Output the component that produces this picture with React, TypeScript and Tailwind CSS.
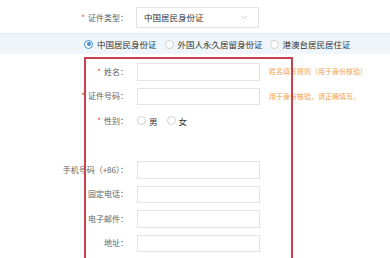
import React from 'react';

const font = { fontFamily: '"Noto Sans CJK SC", "Noto Sans", sans-serif' };

const Radio = ({ checked = false }: { checked?: boolean }) => (
  <span
    className={`inline-flex items-center justify-center w-[9px] h-[9px] rounded-full border bg-white shrink-0 ${
      checked ? 'border-[#3b8fd9]' : 'border-[#cfcfcf]'
    }`}
  >
    {checked && <span className="w-[4px] h-[4px] rounded-full bg-[#3b8fd9]" />}
  </span>
);

const Row = ({
  label,
  required = false,
  hint,
  children,
}: {
  label: string;
  required?: boolean;
  hint?: string;
  children?: React.ReactNode;
}) => (
  <div className="flex items-center h-[17.5px]">
    <div className="w-[128px] text-right text-[8px] text-[#5f5f5f] whitespace-nowrap leading-none">
      {required && <span className="text-[#e4393c] mr-[3px]">*</span>}
      {label}
    </div>
    <div className="ml-[9px] w-[123px] h-full flex items-center">
      {children ?? <div className="w-full h-full border border-[#e3e3e3] bg-white" />}
    </div>
    {hint && (
      <div className="ml-[9px] text-[7px] text-[#f0a24a] whitespace-nowrap leading-none">{hint}</div>
    )}
  </div>
);

export default function App() {
  return (
    <div className="relative w-[390px] h-[258px] overflow-hidden bg-white" style={font}>
      {/* 证件类型 */}
      <div className="flex items-center h-[21px] mt-[7px]">
        <div className="w-[128px] text-right text-[8px] text-[#5f5f5f] leading-none">
          <span className="text-[#e4393c] mr-[3px]">*</span>证件类型：
        </div>
        <div className="ml-[8px] w-[123px] h-full border border-[#e3e3e3] flex items-center justify-between px-[7px]">
          <span className="text-[8.5px] text-[#333] leading-none">中国居民身份证</span>
          <svg width="7" height="5" viewBox="0 0 7 5" className="mr-[3px]">
            <path d="M1 1l2.5 2.5L6 1" stroke="#cfcfcf" strokeWidth="1" fill="none" />
          </svg>
        </div>
      </div>

      {/* 证件选项 */}
      <div className="mt-[5px] h-[21px] bg-[#eef5fb] border-t border-[#dfe9f3] flex items-center pl-[84px] text-[8.5px] text-[#333] leading-none">
        <span className="flex items-center gap-[4px]">
          <Radio checked />
          中国居民身份证
        </span>
        <span className="flex items-center gap-[4px] ml-[8px]">
          <Radio />
          外国人永久居留身份证
        </span>
        <span className="flex items-center gap-[4px] ml-[7px]">
          <Radio />
          港澳台居民居住证
        </span>
      </div>

      <div className="mt-[9px] flex flex-col gap-[7px]">
        <Row label="姓名：" required hint="姓名填写规则（用于身份核验）" />
        <Row label="证件号码：" required hint="用于身份核验，请正确填写。" />
        <Row label="性别：" required>
          <div className="flex items-center text-[8.5px] text-[#333] leading-none">
            <span className="flex items-center gap-[3px]">
              <Radio />男
            </span>
            <span className="flex items-center gap-[3px] ml-[9px]">
              <Radio />女
            </span>
          </div>
        </Row>
        <div className="h-[17.5px]" />
        <Row label="手机号码（+86）：" />
        <Row label="固定电话：" />
        <Row label="电子邮件：" />
        <Row label="地址：" />
      </div>

      {/* 标注框 */}
      <div className="absolute left-[84px] top-[57px] w-[209px] h-[230px] border-2 border-[#c8414f] pointer-events-none" />
    </div>
  );
}
